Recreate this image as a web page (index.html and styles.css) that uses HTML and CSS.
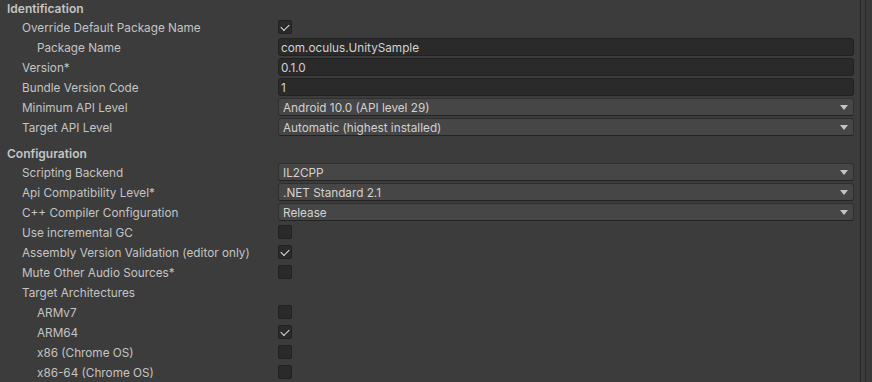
FILE: index.html
```html
<!DOCTYPE html>
<html lang="en">
<head>
    <meta charset="UTF-8">
    <title>Player Settings</title>
    <link rel="stylesheet" href="styles.css">
</head>
<body>
    <div class="window">
        <div class="inspector">
            <div class="section-title">Identification</div>

            <div class="row">
                <label>Override Default Package Name</label>
                <span class="toggle checked"></span>
            </div>
            <div class="row">
                <label class="nested">Package Name</label>
                <div class="field">com.oculus.UnitySample</div>
            </div>
            <div class="row">
                <label>Version*</label>
                <div class="field">0.1.0</div>
            </div>
            <div class="row">
                <label>Bundle Version Code</label>
                <div class="field">1</div>
            </div>
            <div class="row">
                <label>Minimum API Level</label>
                <div class="popup">Android 10.0 (API level 29)</div>
            </div>
            <div class="row">
                <label>Target API Level</label>
                <div class="popup">Automatic (highest installed)</div>
            </div>

            <div class="section-title spaced">Configuration</div>

            <div class="row">
                <label>Scripting Backend</label>
                <div class="popup">IL2CPP</div>
            </div>
            <div class="row">
                <label>Api Compatibility Level*</label>
                <div class="popup">.NET Standard 2.1</div>
            </div>
            <div class="row">
                <label>C++ Compiler Configuration</label>
                <div class="popup">Release</div>
            </div>
            <div class="row">
                <label>Use incremental GC</label>
                <span class="toggle"></span>
            </div>
            <div class="row">
                <label>Assembly Version Validation (editor only)</label>
                <span class="toggle checked"></span>
            </div>
            <div class="row">
                <label>Mute Other Audio Sources*</label>
                <span class="toggle"></span>
            </div>
            <div class="row">
                <label>Target Architectures</label>
            </div>
            <div class="row">
                <label class="nested">ARMv7</label>
                <span class="toggle"></span>
            </div>
            <div class="row">
                <label class="nested">ARM64</label>
                <span class="toggle checked"></span>
            </div>
            <div class="row">
                <label class="nested">x86 (Chrome OS)</label>
                <span class="toggle"></span>
            </div>
            <div class="row">
                <label class="nested">x86-64 (Chrome OS)</label>
                <span class="toggle"></span>
            </div>
        </div>

        <div class="scrollbar">
            <div class="track"></div>
        </div>
    </div>
</body>
</html>
```

FILE: styles.css
```css
* {
    margin: 0;
    padding: 0;
    box-sizing: border-box;
}

body {
    background: #3c3c3c;
    color: #c4c4c4;
    font-family: Inter, "Noto Sans", sans-serif;
    font-size: 11.75px;
    overflow: hidden;
}

.window {
    display: flex;
    height: 382px;
}

.inspector {
    flex: 1;
    padding-right: 6px;
}

.section-title {
    height: 16px;
    line-height: 18px;
    margin-bottom: 2px;
    padding-left: 7px;
    font-size: 12px;
    font-weight: 600;
}

/* previous row's 2px margin collapses into this */
.section-title.spaced {
    margin-top: 9px;
}

.row {
    display: grid;
    grid-template-columns: 278px 1fr;
    align-items: center;
    height: 18px;
    margin-bottom: 2px;
}

.row label {
    margin-top: 2px;
    padding-left: 22px;
    white-space: nowrap;
}

.row label.nested {
    padding-left: 37px;
}

.field,
.popup {
    height: 18px;
    line-height: 18px;
    border: 1px solid #212121;
    border-radius: 3px;
    color: #d2d2d2;
    white-space: nowrap;
    overflow: hidden;
}

.field {
    background: #2a2a2a;
    padding-left: 2px;
}

.popup {
    position: relative;
    background: #464646;
    border-color: #303030;
    border-bottom-color: #242424;
    padding-left: 4px;
}

/* little dropdown arrow */
.popup::after {
    content: "";
    position: absolute;
    right: 5px;
    top: 6px;
    border-left: 4px solid transparent;
    border-right: 4px solid transparent;
    border-top: 5px solid #c4c4c4;
}

.toggle {
    width: 14px;
    height: 14px;
    background: #2a2a2a;
    border: 1px solid #212121;
    border-radius: 2px;
    display: flex;
    align-items: center;
    justify-content: center;
}

.toggle.checked::after {
    content: "";
    width: 7px;
    height: 4px;
    margin-top: -2px;
    border-left: 1.5px solid #e6e6e6;
    border-bottom: 1.5px solid #e6e6e6;
    transform: rotate(-45deg);
}

.scrollbar {
    width: 12px;
    border-left: 1px solid #282828;
    padding-left: 4px;
}

.track {
    height: 100%;
    border-left: 1px solid #282828;
    background: #393939;
}
```
